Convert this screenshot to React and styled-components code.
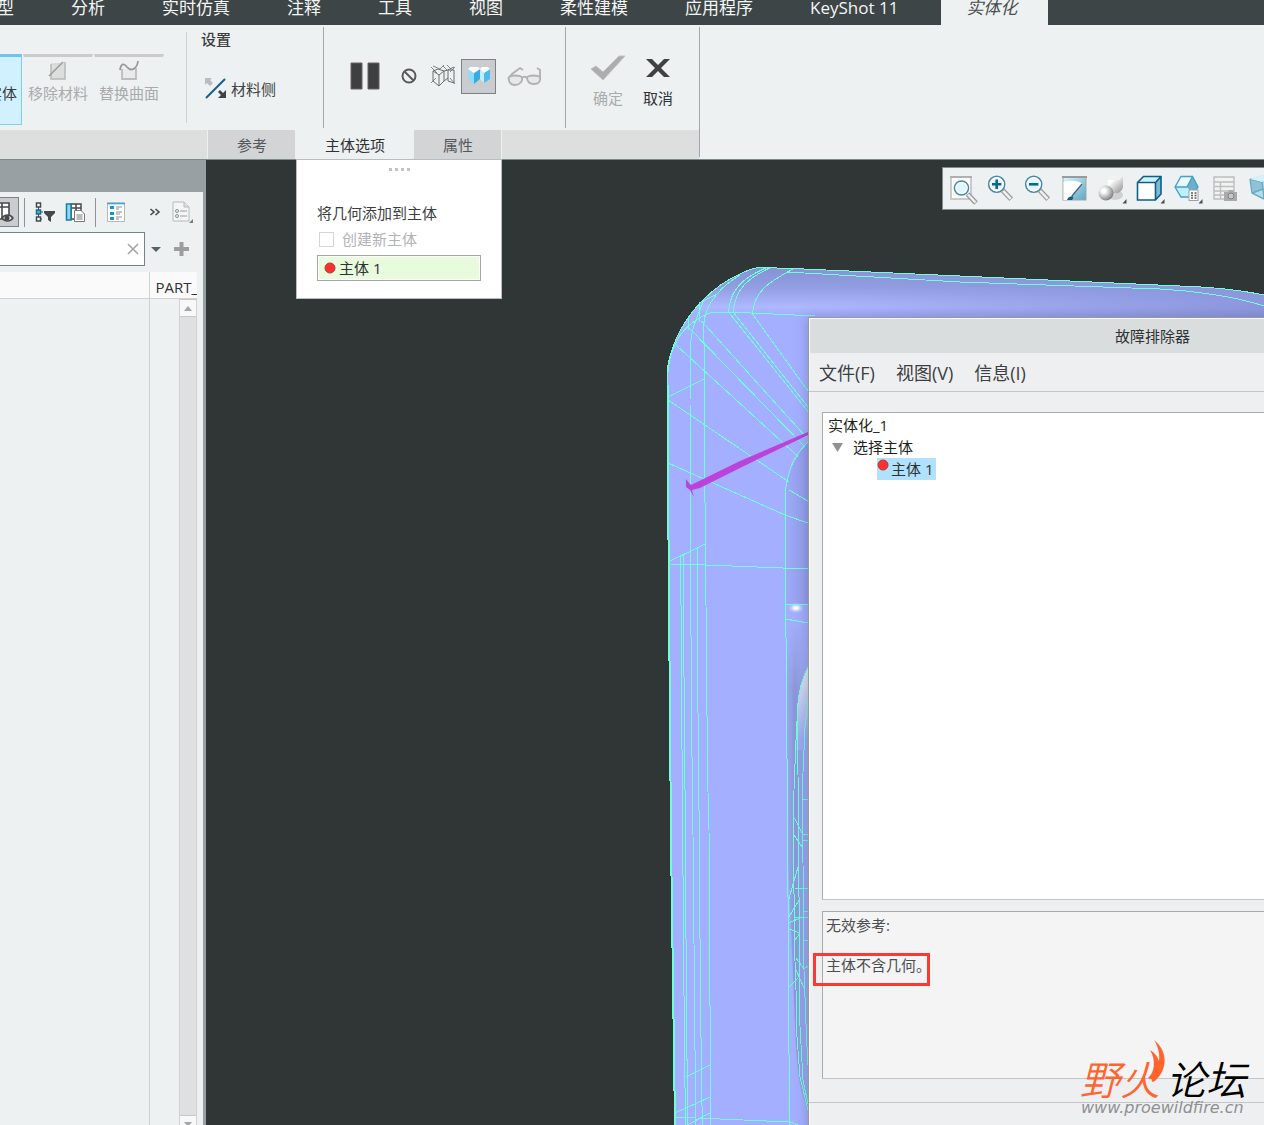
import React, { useState } from 'react';
import styled, { createGlobalStyle } from 'styled-components';

const GlobalStyle = createGlobalStyle`
* {
  box-sizing: border-box;
}
body {
  margin: 0;
  font-family: "Open Sans", "Noto Sans CJK SC", sans-serif;
  font-size: 15px;
  line-height: 20px;
  color: #3c3f41;
}
button, input {
  font: inherit;
  color: inherit;
}
button {
  padding: 0;
  border: none;
  background: none;
  white-space: nowrap;
}
svg {
  display: block;
  flex: none;
  overflow: visible;
}
`

const Page = styled.div`
display: flex;
flex-direction: column;
height: 100vh;
overflow: hidden;
background-color: #303636;
position: relative;
`

/* ---------- top menu ---------- */
const MenuBar = styled.nav`
display: flex;
flex: none;
height: 25px;
margin-left: -48px;
background-color: #3d4546;
overflow: hidden;
`
const MenuTab = styled.button`
height: 25px;
padding: ${props => props.$active ? '0 31px 10px 25px' : '0 29px 10px 28px'};
margin-left: ${props => props.$active ? '14px' : '0'};
font-size: 17px;
line-height: 14px;
font-style: ${props => props.$active ? 'italic' : 'normal'};
color: ${props => props.$active ? '#4a4d4e' : '#f4f6f6'};
background-color: ${props => props.$active ? '#edf1f2' : 'transparent'};
`

/* ---------- ribbon ---------- */
const Ribbon = styled.header`
display: flex;
flex: none;
position: relative;
z-index: 5;
background-color: #edf1f2;
border-bottom: 1px solid #7d8a8a;
`
const RibbonMain = styled.div`
display: flex;
flex-direction: column;
`
const RibbonTools = styled.div`
display: flex;
height: 105px;
`
const Divider = styled.span`
flex: none;
width: 1px;
margin: ${props => props.$inset || '2px'} 0;
background-color: ${props => props.$color || '#a3a7a8'};
`
const SolidGroup = styled.div`
display: flex;
align-items: flex-start;
gap: 1px;
padding: 29px 22px 0 0;
margin-left: -48px;
`
const BigButton = styled.button`
display: flex;
flex-direction: column;
align-items: center;
justify-content: flex-end;
width: 70px;
height: 71px;
padding-bottom: 21px;
color: ${props => props.$active ? '#3c3f41' : '#a9abac'};
background-color: ${props => props.$active ? '#d2f1ff' : 'transparent'};
border: 1px solid ${props => props.$active ? '#7fcdf7' : 'transparent'};
border-top: 3px solid ${props => props.$active ? '#6cc4f2' : '#c9cbcc'};
`
const SettingGroup = styled.div`
padding: 4px 47px 0 14px;
`
const GroupTitle = styled.div`
font-weight: 500;
`
const SideButton = styled.button`
display: flex;
align-items: center;
gap: 5px;
margin: 29px 0 0 4px;
`
const PreviewGroup = styled.div`
display: flex;
align-items: center;
padding: 0 24px 3px 26px;
gap: 11px;
`
const PreviewButton = styled.button`
display: flex;
align-items: center;
justify-content: center;
width: ${props => props.$active ? '35px' : 'auto'};
height: 35px;
margin-left: ${props => props.$active ? '-6px' : '0'};
background-color: ${props => props.$active ? '#cbcccf' : 'transparent'};
border: ${props => props.$active ? '1px solid #7e8182' : 'none'};
`
const ConfirmGroup = styled.div`
display: flex;
align-items: flex-start;
gap: 17px;
padding: 29px 26px 0 24px;
`
const ConfirmButton = styled.button`
display: flex;
flex-direction: column;
align-items: center;
gap: 6px;
color: ${props => props.disabled ? '#a9abac' : '#303334'};
`
const TabStrip = styled.div`
display: flex;
height: 29px;
padding-left: 207px;
background-color: #dddfdf;
`
const TabHolder = styled.div`
position: relative;
border-left: 1px solid #eef0f0;
&:last-child {
  border-right: 1px solid #eef0f0;
}
`
const StripTab = styled.button`
height: 29px;
padding: 1px 28px 0 29px;
color: ${props => props.$active ? '#303334' : '#55585a'};
background-color: ${props => props.$active ? '#edf1f2' : '#d3d4d6'};
`

/* ---------- drop panel under the tab ---------- */
const Popup = styled.section`
position: absolute;
top: 100%;
left: 0;
width: 206px;
padding: 8px 20px 17px;
background-color: #ffffff;
border: 1px solid #b9bdbf;
`
const Grip = styled.div`
display: flex;
justify-content: center;
gap: 3px;
height: 35px;
span {
  width: 3px;
  height: 3px;
  background-color: #c3c3c3;
}
`
const CheckLabel = styled.label`
display: flex;
align-items: center;
gap: 8px;
margin: 6px 0;
padding-left: 2px;
color: #b1b3b4;
input {
  appearance: none;
  width: 15px;
  height: 15px;
  margin: 0;
  border: 1px solid #d4d6d6;
}
`
const BodyField = styled.button`
display: flex;
align-items: center;
gap: 3px;
width: 100%;
height: 26px;
padding-left: 6px;
color: #303334;
background-color: #e8fbdd;
border: 1px solid #a4a7a8;
box-shadow: inset 0 0 0 1px #ffffff;
`

/* ---------- model tree ---------- */
const Workspace = styled.main`
display: flex;
flex: 1;
min-height: 0;
`
const TreePanel = styled.aside`
display: flex;
flex-direction: column;
flex: none;
padding: 32px 3px 0 0;
background-color: #99a0a3;
`
const TreeBody = styled.div`
display: flex;
flex-direction: column;
flex: 1;
min-height: 0;
padding-right: 6px;
background-color: #edf1f2;
`
const TreeTools = styled.div`
display: flex;
align-items: center;
gap: 10px;
height: 40px;
margin-left: -21px;
`
const TreeToolButton = styled.button`
display: flex;
align-items: center;
justify-content: center;
width: ${props => props.$width || '20px'};
height: 30px;
margin-left: ${props => props.$push || '0'};
margin-right: ${props => props.$active ? '-5px' : '0'};
background-color: ${props => props.$active ? '#cbcccf' : 'transparent'};
border: ${props => props.$active ? '1px solid #7e8182' : 'none'};
`
const ToolDivider = styled.span`
width: 1px;
height: 29px;
background-color: #8e9394;
`
const SearchRow = styled.div`
display: flex;
align-items: center;
gap: 6px;
`
const SearchBox = styled.div`
display: flex;
align-items: center;
width: 146px;
height: 34px;
margin-left: -1px;
padding-right: 6px;
background-color: #ffffff;
border: 1px solid #71858a;
input {
  flex: 1;
  min-width: 0;
  border: none;
  outline: none;
  background: none;
}
`
const AddButton = styled.button`
margin-left: 7px;
`
const TreeTableWrap = styled.div`
position: relative;
flex: 1;
min-height: 0;
width: 197px;
margin-top: 6px;
overflow: hidden;
`
const TreeTable = styled.table`
width: 100%;
height: 100%;
table-layout: fixed;
border-collapse: collapse;
th {
  height: 26px;
  padding: 4px 0 0 6px;
  overflow: hidden;
  font-weight: 400;
  text-align: left;
  white-space: nowrap;
  color: #303334;
  background-color: #fafafa;
  border-bottom: 1px solid #cfd1d3;
}
th:first-child, td:first-child {
  width: 149px;
  border-right: 1px solid #cfd1d3;
}
`
const ScrollBar = styled.div`
position: absolute;
top: 27px;
right: 0;
bottom: -9px;
display: flex;
flex-direction: column;
justify-content: space-between;
width: 18px;
background-color: #dee0e2;
border: 1px solid #cfd1d3;
border-top: none;
`
const ScrollButton = styled.button`
display: flex;
align-items: center;
justify-content: center;
height: 18px;
background-color: #f7f8f8;
border: solid #c6c8ca;
border-width: 1px 0;
`

/* ---------- graphics area ---------- */
const Canvas = styled.div`
position: relative;
flex: 1;
overflow: hidden;
background-color: #303636;
`
const ModelDrawing = styled.svg`
width: 100%;
height: 100%;
`
const ViewBar = styled.div`
position: absolute;
top: 7px;
left: 736px;
display: flex;
height: 43px;
background-color: #edf1f2;
border: 1px solid #828c8b;
`
const ViewButton = styled.button`
display: flex;
flex: none;
align-items: center;
justify-content: center;
width: ${props => props.$menu ? '38px' : '37px'};
padding: 0 0 2px 2px;
`

/* ---------- dialog window ---------- */
const Dialog = styled.section`
position: absolute;
top: 157px;
left: 602px;
width: 688px;
bottom: -60px;
background-color: #eeeff1;
border: 1px solid #98999a;
box-shadow: inset 1px 1px 0 #fafafa, -1px 0 12px rgba(40, 40, 90, 0.25);
`
const DialogTitle = styled.h1`
height: 35px;
margin: 0 0 0 1px;
padding-top: 7px;
font-size: 15px;
font-weight: 400;
line-height: 20px;
text-align: center;
color: #303334;
background-color: #d9dddd;
border-top: 1px solid #f5f6f6;
`
const DialogMenu = styled.div`
display: flex;
gap: 21px;
height: 39px;
padding-left: 10px;
font-size: 18px;
border-bottom: 1px solid #c3c5c9;
button {
  padding-top: 2px;
}
`
const DialogBody = styled.div`
padding: 20px 12px 23px 13px;
border-bottom: 1px solid #c3c5c9;
`
const TreeList = styled.ul`
height: 488px;
margin: 0 0 11px;
padding: 1px 5px;
list-style: none;
line-height: 22px;
color: #1d1f20;
background-color: #ffffff;
border: 1px solid #a8abae;
border-bottom-color: #c3c5c9;
`
const TreeItem = styled.li`
display: flex;
align-items: center;
gap: 10px;
height: 22px;
padding-left: ${props => props.$indent || '0'};
`
const Selected = styled.span`
display: flex;
gap: 2px;
height: 22px;
padding: 0 3px 0 0;
color: #303334;
background-color: #b0e2ff;
svg {
  margin-top: 1px;
}
`
const Message = styled.div`
height: 168px;
padding: 3px 3px;
color: #4c4f51;
background-color: #f4f4f4;
border: 1px solid #a8abae;
border-bottom-color: #c3c5c9;
p {
  margin: 0 0 20px;
}
`
const Marked = styled.span`
position: relative;
&::after {
  content: "";
  position: absolute;
  inset: -2px 1px -11px -13px;
  border: 3px solid #fb3838;
}
`

/* ---------- site mark ---------- */
const SiteMark = styled.div`
position: absolute;
right: 18px;
bottom: 9px;
color: #000000;
`
const SiteName = styled.div`
display: flex;
gap: 6px;
font-family: "Noto Sans CJK SC", sans-serif;
font-size: 40px;
font-weight: 350;
font-style: italic;
line-height: 44px;
white-space: nowrap;
`
const Fire = styled.span`
color: #ff6430;
`
const SiteUrl = styled.div`
padding-left: 1px;
font-family: "DejaVu Sans", sans-serif;
font-size: 16px;
font-style: italic;
line-height: 16px;
color: #8e9092;
`
const Flame = styled.svg`
position: absolute;
top: -16px;
left: 67px;
`

function RedDot() {
    return (
        <svg width="12" height="12" viewBox="0 0 12 12">
            <circle cx="6" cy="6" r="5" fill="#fb3131" stroke="#b33a33" />
        </svg>
    )
}

function Triangle({ up, width = 10, height = 5, color = '#5c6061' }) {
    return (
        <svg width={width} height={height} viewBox="0 0 10 5" preserveAspectRatio="none">
            <path d={up ? 'M0 5L5 0L10 5Z' : 'M0 0H10L5 5Z'} fill={color} />
        </svg>
    )
}

function Corner() {
    return <path d="M25.500 29.500H29.500V25Z" fill="#4a4d4e" />
}

function Lens({ x, y, r, sign }) {
    return (
        <g>
            <path d={`M${x + 6} ${y + 6}l8.500 9`} stroke="#9b9c9d" strokeWidth="5" />
            <path d={`M${x + 6.5} ${y + 6.5}l7.500 8`} stroke="#f0f0f0" strokeWidth="2.500" />
            <circle cx={x} cy={y} r={r} fill="#dff6ff" stroke="#4a88a5" strokeWidth="1.6" />
            <circle cx={x} cy={y} r={r - 1.6} fill="none" stroke="#ffffff" strokeWidth="1.4" />
            {sign && <path d={sign} stroke="#0e668f" strokeWidth="2.6" />}
        </g>
    )
}

const viewIcons = [
    {
        name: '重新调整', draw: <>
            <rect x="2" y="3" width="20" height="22" fill="#fcfcfc" stroke="#c0c0c1" strokeWidth="1.6" />
            <path d="M1 3H23" stroke="#a9a9aa" strokeWidth="1.600" />
            <Lens x={12.5} y={14} r={7} />
        </>
    },
    { name: '放大', draw: <Lens x={10.7} y={10.3} r={8} sign="M6 10.300h9.400M10.700 5.600v9.400" /> },
    { name: '缩小', draw: <Lens x={10.7} y={10.3} r={8} sign="M6 10.300h9.400" /> },
    {
        name: '重画', draw: <>
            <rect x="3" y="3" width="23" height="23" fill="url(#sky)" stroke="#a5a7a8" />
            <path d="M3.500 8C10 6 18 6 22 9.500L11 22L7 26H3.500Z" fill="#ffffff" />
            <path d="M22 10L12 22" stroke="#41677a" strokeWidth="1.200" />
            <path d="M7 26C8 23 10 22 13 22.500C13.500 24 13 25 12 26Z" fill="#0d5f85" />
            <path d="M2 3H27" stroke="#989a9b" strokeWidth="2" />
        </>
    },
    {
        name: '渲染选项', menu: true, draw: <>
            <ellipse cx="18" cy="21" rx="8" ry="5" fill="#cfd0d1" />
            <path d="M11 5Q12 2 15 2H26V13Q25 17 21 19H11Z" fill="url(#steel)" />
            <path d="M11 5Q12 2 15 2H26L22 6H11Z" fill="#f1f1f1" />
            <circle cx="9" cy="19" r="7.500" fill="url(#ball)" />
            <Corner />
        </>
    },
    {
        name: '显示样式', menu: true, draw: <>
            <path d="M2.500 8.500L8.500 2.500H26L20.500 8.500Z" fill="#c9f3ff" />
            <path d="M20.500 8.500L26 2.500V20L20.500 26Z" fill="#7fbad3" />
            <path d="M2.500 8.500H20.500V26H2.500Z" fill="#ffffff" />
            <path d="M2.500 8.500L8.500 2.500H26V20L20.500 26H2.500ZM2.500 8.500H20.500V26M20.500 8.500L26 2.500" fill="none" stroke="#0d5f85" strokeWidth="1.600" />
            <Corner />
        </>
    },
    {
        name: '已保存方向', menu: true, draw: <>
            <path d="M2 13L8 2.500H19.500L14 13Z" fill="#e8faff" />
            <path d="M2 13H14L18 23H8Z" fill="#bfeeff" />
            <path d="M19.500 2.500L25 13L22 17H17L14 13Z" fill="#6db0cc" />
            <path d="M2 13L8 2.500H19.500L25 13L18 23H8ZM2 13H14L19.500 2.500" fill="none" stroke="#46a1c6" strokeWidth="1.400" />
            <rect x="16" y="16" width="9" height="10.500" fill="#ffffff" stroke="#a0a0a0" />
            <path d="M18 19h2M21.500 19h2M18 21.500h2M21.500 21.500h2M18 24h2M21.500 24h2" stroke="#5b5b5b" strokeWidth="1.300" />
            <Corner />
        </>
    },
    {
        name: '视图管理器', draw: <>
            <path d="M3 3H23V25H3ZM3 8H23M3 12.500H23M3 17H23M3 21H14M9.500 8V25" fill="#f2f2f2" stroke="#bcbebf" strokeWidth="1.400" />
            <path d="M13 18H17L18 16H22L23 18H26V27H13Z" fill="#a8aaab" />
            <circle cx="20" cy="22" r="3" fill="#c5c6c7" stroke="#808283" />
        </>
    },
    {
        name: '透视图', draw: <>
            <path d="M2 5L14 1L27 4L25 20L16 25L4 19Z" fill="#b4dcea" />
            <path d="M2 5L5 18L15 15L14 8Z" fill="#8fc2d6" />
            <path d="M2 5L14 8L27 4M14 8L15 15L16 25M4 19L15 15L25 20M2 5L4 19L16 25" fill="none" stroke="#6ba9c0" strokeWidth="1.400" />
            <path d="M2 5L14 1L27 4L14 8Z" fill="#d5f2fc" />
        </>
    },
]

function ViewToolbar() {
    return (
        <ViewBar>
            {viewIcons.map(icon => (
                <ViewButton key={icon.name} aria-label={icon.name} $menu={icon.menu}>
                    <svg width="28" height="28" viewBox="0 0 28 28">{icon.draw}</svg>
                </ViewButton>
            ))}
        </ViewBar>
    )
}

const outline = 'M1264 295C1240 290 1210 287 1180 286L960 276L793 268.500L760 267.500C750 268 745 272 740 274C726 280 714 289 703 300C692 311 683 324 677 337C671 350 668 361 667 372V390'

/* mesh edges of the part, in window coordinates */
const edges = [
    'M815 316L730 312L710 313C702 315 697 320 692 323C683 330 678 338 677 341C671 351 669 360 668 372',
    'M787 272L960 282L1160 289C1200 291 1240 298 1264 306',
    'M768 267C742 278 730 290 728.500 312L808 411.500',
    'M772 267C747 278 735 290 733 312L808 407',
    'M793 269C771 281 754 290 752.500 314L808 391',
    'M740 275C722 286 711 298 706 313C702 325 704 336 704 342L704.500 460L705.500 543L706.500 668L707.700 780L709 830L710 1006L711 1125',
    'M699 305L700 322M688 318L688 330M699 303L717 294M704 300C700 310 692 325 691 340L690 400L690.500 555L691.500 716L693 835L695 1050L696 1125',
    'M701.500 321L806 437', 'M688 327L805 447', 'M676 345L798 456.500',
    'M668 400L789 482', 'M789 490L808 501', 'M668 463L785 515L808 523', 'M668 397L704 379',
    'M808 442C801 449 795 458 793 462C787 475 785 488 785 502L785.500 575L786.500 700L787.700 840L788.700 1023L789.700 1125',
    'M670 561L705.500 544', 'M670 564L706 565L808 569',
    'M680.700 555L681.700 713L682.700 830L683.500 947L684.700 1063L685.500 1125',
    'M683 555L684 677L685 790L685.700 903L686.700 1017L687.500 1125',
    'M697.300 548L697.300 647L698.300 740L699.300 840L700.300 980L701.300 1060L702.300 1125',
    'M686 1077L710 1065', 'M675 1113L710 1097', 'M675 1117H695', 'M687 1125L710 1113',
    'M700 1118L720 1119L790 1122L798 1125',
    'M786 604H808', 'M786 619L808 623',
    'M808 667C801 680 799 692 798 703L796 740L794 790L793.500 840L794.500 947L796 990L797 1037L800 1077L808 1110',
    'M808 700L805 727L803 773L802.500 833L803 863L803.500 957L806.500 1037L808 1065',
    'M797 710L798 775L798.500 840L799 897L800 950L799.500 1017L803 1080L808 1104',
    'M803 799H808', 'M803 834H808', 'M803 840H808', 'M803 911H808', 'M795 917H808', 'M803 940H808', 'M795 888H808',
    'M794.500 818L803 835', 'M794 835L802 847', 'M798 867L788 902', 'M799 900L789 917', 'M789 923L800 918',
    'M789 929L800 933L795 940', 'M796 958L804 969L808 966', 'M796 970L804 988', 'M789 987L798 978',
]

function PartModel() {
    return (
        <ModelDrawing viewBox="206 160 1058 965" preserveAspectRatio="xMinYMin slice" aria-hidden="true">
            <defs>
                <linearGradient id="bevel" x1="0" y1="267" x2="0" y2="314" gradientUnits="userSpaceOnUse">
                    <stop offset="0" stopColor="#8791d4" />
                    <stop offset="0.450" stopColor="#939ee3" />
                    <stop offset="0.850" stopColor="#adb8ff" />
                    <stop offset="1" stopColor="#a5b0fd" />
                </linearGradient>
                <linearGradient id="far" x1="830" y1="0" x2="1264" y2="0" gradientUnits="userSpaceOnUse">
                    <stop offset="0" stopColor="#8a94da" stopOpacity="0" />
                    <stop offset="1" stopColor="#8a94da" stopOpacity="0.900" />
                </linearGradient>
                <linearGradient id="pocket" x1="786" y1="0" x2="808" y2="0" gradientUnits="userSpaceOnUse">
                    <stop offset="0" stopColor="#9ca7f2" />
                    <stop offset="0.400" stopColor="#8b96d8" />
                    <stop offset="1" stopColor="#a0abf5" />
                </linearGradient>
                <linearGradient id="lip" x1="770" y1="0" x2="808" y2="0" gradientUnits="userSpaceOnUse">
                    <stop offset="0" stopColor="#929de8" stopOpacity="0" />
                    <stop offset="1" stopColor="#929de8" stopOpacity="0.900" />
                </linearGradient>
                <linearGradient id="fade" x1="0" y1="604" x2="0" y2="690" gradientUnits="userSpaceOnUse">
                    <stop offset="0.200" stopColor="#a3affd" />
                    <stop offset="1" stopColor="#a3affd" stopOpacity="0" />
                </linearGradient>
                <linearGradient id="rim" x1="0" y1="667" x2="0" y2="740" gradientUnits="userSpaceOnUse">
                    <stop offset="0" stopColor="#e3edee" />
                    <stop offset="1" stopColor="#9da9f3" />
                </linearGradient>
                <radialGradient id="shine">
                    <stop offset="0.200" stopColor="#ffffff" />
                    <stop offset="1" stopColor="#a3affd" stopOpacity="0" />
                </radialGradient>
                <linearGradient id="sky" x1="0" y1="0" x2="1" y2="1">
                    <stop offset="0" stopColor="#d9f6ff" />
                    <stop offset="1" stopColor="#5ea6c3" />
                </linearGradient>
                <linearGradient id="steel" x1="0.200" y1="0" x2="1" y2="1">
                    <stop offset="0.200" stopColor="#ffffff" />
                    <stop offset="1" stopColor="#8b8c8d" />
                </linearGradient>
                <radialGradient id="ball" cx="0.350" cy="0.350" r="0.650">
                    <stop offset="0.200" stopColor="#ffffff" />
                    <stop offset="1" stopColor="#858788" />
                </radialGradient>
            </defs>
            <path d={outline + 'L668.500 540L671 840L675 1125H1264Z'} fill="#a4b0ff" />
            <path d="M1264 295C1240 290 1210 287 1180 286L960 276L793 268.500L760 267.500C750 268 745 272 740 274C726 280 714 289 703 300C692 311 683 324 677 340C684 330 698 314 712 313L730 312L808 316L1264 330Z" fill="url(#bevel)" />
            <path d="M830 271L960 276L1180 286C1210 287 1240 290 1264 295V330H830Z" fill="url(#far)" />
            <path d="M808 442C795 456 785 480 785 502L786 604H808Z" fill="url(#lip)" />
            <path d="M786 605H808V1110C798 1090 796 1060 794 1000L788 860Z" fill="url(#pocket)" />
            <path d="M786 605H808V690H786Z" fill="url(#fade)" />
            <path d="M808 667C801 680 799 692 798 703L796 750H808Z" fill="url(#rim)" />
            <ellipse cx="796" cy="608" rx="9" ry="6" fill="url(#shine)" />
            <g fill="none" stroke="#6dffd8" strokeWidth="1" shapeRendering="crispEdges">
                <path d={outline} />
                <path d="M667.500 385L668.500 540L671 840L675 1125" strokeWidth="2" />
                {edges.map(d => <path key={d} d={d} />)}
            </g>
            <path d="M808 432L740 461L691 485L689 483L686 479L686 487L690 490L694 497L692 490L700 488L740 468L808 435Z" fill="#bb42dd" />
        </ModelDrawing>
    )
}

function BodyPanel() {
    return (
        <Popup>
            <Grip><span /><span /><span /><span /></Grip>
            <div>将几何添加到主体</div>
            <CheckLabel>
                <input type="checkbox" disabled />
                创建新主体
            </CheckLabel>
            <BodyField><RedDot />主体 1</BodyField>
        </Popup>
    )
}

function RibbonBar() {
    const [tab, setTab] = useState('主体选项');

    return (
        <Ribbon>
            <RibbonMain>
                <RibbonTools>
                    <SolidGroup>
                        <BigButton $active>填充实体</BigButton>
                        <BigButton disabled>
                            <svg width="20" height="22" viewBox="0 0 20 22">
                                <path d="M3 3V18H17V1" fill="#dcdddd" stroke="#b7b8b8" strokeWidth="1.5" />
                                <path d="M3 3H14" stroke="#c9cacb" strokeDasharray="2 1" />
                                <path d="M1 15L15 1" stroke="#9c9e9f" strokeWidth="1.600" />
                            </svg>
                            移除材料
                        </BigButton>
                        <BigButton disabled>
                            <svg width="20" height="22" viewBox="0 0 20 22">
                                <path d="M3 8V18H17V7" fill="#e9eaea" stroke="#bcbdbe" strokeWidth="1.800" />
                                <path d="M1 9C2 2 5 2 8 6C12 11 18 8 19 0" fill="none" stroke="#989a9b" strokeWidth="1.800" />
                            </svg>
                            替换曲面
                        </BigButton>
                    </SolidGroup>
                    <Divider $inset="7px" $color="#cdd1d2" />
                    <SettingGroup>
                        <GroupTitle>设置</GroupTitle>
                        <SideButton>
                            <svg width="21" height="21" viewBox="0 0 21 21">
                                <path d="M1 20L20 1" stroke="#0f6189" strokeWidth="2" />
                                <path d="M0 0H7L5 2L8 5L5 8L2 5L0 7Z" fill="#b9bbbc" />
                                <path d="M21 20H13L16 17L13 14L15 12L18 15L21 12Z" fill="#404344" />
                            </svg>
                            材料侧
                        </SideButton>
                    </SettingGroup>
                    <Divider />
                    <PreviewGroup>
                        <PreviewButton aria-label="暂停">
                            <svg width="30" height="28" viewBox="0 0 30 28">
                                <path d="M1 1H12V27H1ZM18 1H29V27H18Z" fill="#3e3f40" stroke="#6a6060" strokeWidth="1" />
                            </svg>
                        </PreviewButton>
                        <PreviewButton aria-label="无预览">
                            <svg width="28" height="16" viewBox="-10 0 28 16">
                                <circle cx="8" cy="8" r="6.500" fill="none" stroke="#58595b" strokeWidth="2" />
                                <path d="M3.500 3.500L12.500 12.500" stroke="#58595b" strokeWidth="2" />
                            </svg>
                        </PreviewButton>
                        <PreviewButton aria-label="分离">
                            <svg width="26" height="24" viewBox="0 0 26 24" fill="none" stroke="#6c6e70">
                                <path d="M3 7L9 11V22L3 17ZM9 11L14 7V17L9 22M3 7L8 5L14 7" />
                                <path d="M18 6L24 3M18 6V17L24 19V6L18 6M14 7L18 6M14 17L18 14" />
                                <path d="M1 3L7 9M3 2L10 5L14 1M13 2L17 6M17 1L21 5M25 3L20 8M1 19L6 14M25 20L20 14" strokeWidth="0.800" />
                            </svg>
                        </PreviewButton>
                        <PreviewButton aria-label="连接" $active>
                            <svg width="24" height="18" viewBox="0 0 24 18">
                                <path d="M1 2L7 6V17L1 12Z" fill="#8fdcf8" />
                                <path d="M13 2L7 6V17L13 12Z" fill="#35ade4" />
                                <path d="M13 3L17 6V16L13 12Z" fill="#c4eefc" />
                                <path d="M23 2L17 6V16L23 12Z" fill="#4dbbec" />
                                <path d="M1 2L3 0H11L13 2L7 6ZM13 2L15 0H21L23 2L17 6Z" fill="#ffffff" />
                            </svg>
                        </PreviewButton>
                        <PreviewButton aria-label="校核" disabled>
                            <svg width="34" height="16" viewBox="0 2 34 16" fill="#e7e8e8" stroke="#aeb0b1" strokeWidth="1.800">
                                <path d="M1 13L5 8L13 2L16 4M30 2L33 4V11" fill="none" />
                                <path d="M2 11C5 9 12 9 15 11C16 15 13 19 8 19C3 19 1 15 2 11ZM20 11C23 9 30 9 33 11C34 16 31 18 27 18C22 18 20 15 20 11ZM15 12C17 10 18 10 20 12" />
                            </svg>
                        </PreviewButton>
                    </PreviewGroup>
                    <Divider />
                    <ConfirmGroup>
                        <ConfirmButton disabled>
                            <svg width="36" height="28" viewBox="0 0 36 28">
                                <path d="M1 15L6 12L13 18L29 2H35L13 26Z" fill="#abadae" stroke="#c0c2c3" />
                            </svg>
                            确定
                        </ConfirmButton>
                        <ConfirmButton>
                            <svg width="30" height="28" viewBox="0 0 30 28">
                                <path d="M3 5H9L15 11L21 5H27L18 14L27 23H21L15 17L9 23H3L12 14Z" fill="#3f4142" />
                            </svg>
                            取消
                        </ConfirmButton>
                    </ConfirmGroup>
                </RibbonTools>
                <TabStrip>
                    {['参考', '主体选项', '属性'].map(name => (
                        <TabHolder key={name}>
                            <StripTab $active={tab === name} onClick={() => setTab(name)}>{name}</StripTab>
                            {name === '主体选项' && tab === name && <BodyPanel />}
                        </TabHolder>
                    ))}
                </TabStrip>
            </RibbonMain>
            <Divider />
        </Ribbon>
    )
}

function ModelTree() {
    return (
        <TreePanel>
            <TreeBody>
                <TreeTools>
                    <TreeToolButton $active $width="40px" aria-label="列显示">
                        <svg width="28" height="20" viewBox="0 0 28 20">
                            <path d="M11 1H24V17H11ZM11 5H24M17 1V17" fill="#fff" stroke="#45494a" strokeWidth="1.6" />
                            <path d="M10 1H15V18H10Z" fill="#1680b4" />
                            <path d="M17 16C20 12 25 12 28 16C25 20 20 20 17 16Z" fill="#e8e8e8" stroke="#45494a" strokeWidth="1.5" />
                            <circle cx="22" cy="16" r="2.500" fill="#45494a" />
                        </svg>
                    </TreeToolButton>
                    <ToolDivider />
                    <TreeToolButton aria-label="树过滤器">
                        <svg width="20" height="20" viewBox="0 0 20 20">
                            <path d="M3.500 2V18M3.500 10H8M3.500 17H7" stroke="#45494a" />
                            <path d="M1.500 1H5.500V5H1.500ZM1.500 15H5.500V19H1.500Z" fill="#fff" stroke="#45494a" strokeWidth="1.500" />
                            <path d="M1.500 8H5.500V12H1.500Z" fill="#44b8ea" stroke="#1b6a90" strokeWidth="1.500" />
                            <path d="M9 9H20V11L16 15V20L13 18V15L9 11Z" fill="#45494a" />
                        </svg>
                    </TreeToolButton>
                    <TreeToolButton aria-label="树列">
                        <svg width="20" height="20" viewBox="0 0 20 20">
                            <path d="M6 2H16V17H6ZM6 6H16M11 2V17" fill="#fff" stroke="#45494a" strokeWidth="1.500" />
                            <path d="M1.500 2H6V18H1.500Z" fill="#8bdcf8" stroke="#1b7ba8" strokeWidth="1.500" />
                            <path d="M9.500 8.500H16L19.500 12V19.500H9.500Z" fill="#fff" stroke="#77797a" />
                            <path d="M11.500 13h6M11.500 15h6M11.500 17h6" stroke="#77797a" />
                        </svg>
                    </TreeToolButton>
                    <ToolDivider />
                    <TreeToolButton aria-label="显示">
                        <svg width="18" height="20" viewBox="0 0 18 20">
                            <path d="M0.500 1V19.500H17.500V1Z" fill="#fff" stroke="#b5b7b8" />
                            <path d="M0 1.500H18" stroke="#36a6db" strokeWidth="1.600" />
                            <path d="M3 4h4v3H3ZM3 10h4v3H3ZM3 15h4v3H3Z" fill="#1b92cb" />
                            <path d="M9 5h6M9 7h3M9 10h6M9 12h4M9 15h6M9 17h3" stroke="#8c8e8f" />
                        </svg>
                    </TreeToolButton>
                    <TreeToolButton $width="10px" $push="14px" aria-label="更多">
                        <svg width="10" height="8" viewBox="0 0 10 8" fill="none" stroke="#45494a" strokeWidth="1.600">
                            <path d="M0.500 1L4 4L0.500 7M5.500 1L9 4L5.500 7" />
                        </svg>
                    </TreeToolButton>
                    <TreeToolButton $width="24px" aria-label="设置">
                        <svg width="20" height="22" viewBox="0 0 20 22">
                            <path d="M1 1H12L17 6V20H1Z" fill="#f4f5f5" stroke="#b7babb" />
                            <path d="M12 1V6H17" fill="#dcdedf" stroke="#b7babb" />
                            <circle cx="5" cy="10" r="1.500" fill="none" stroke="#7f9098" />
                            <circle cx="5" cy="15" r="1.500" fill="none" stroke="#7f9098" />
                            <path d="M8 10h7M8 15h7" stroke="#9a9d9e" />
                            <path d="M17 22H21V18Z" fill="#77797a" />
                        </svg>
                    </TreeToolButton>
                </TreeTools>
                <SearchRow>
                    <SearchBox>
                        <input type="text" name="search" aria-label="搜索" />
                        <button aria-label="清除">
                            <svg width="10" height="10" viewBox="0 0 10 10">
                                <path d="M0 0L10 10M10 0L0 10" stroke="#a3a5a6" strokeWidth="1.600" />
                            </svg>
                        </button>
                    </SearchBox>
                    <button aria-label="搜索选项"><Triangle /></button>
                    <AddButton aria-label="添加">
                        <svg width="15" height="14" viewBox="0 0 15 14">
                            <path d="M7.500 0V14M0 7H15" stroke="#9b9d9e" strokeWidth="4" />
                        </svg>
                    </AddButton>
                </SearchRow>
                <TreeTableWrap>
                    <TreeTable>
                        <thead>
                            <tr><th /><th>PART_</th></tr>
                        </thead>
                        <tbody>
                            <tr><td /><td /></tr>
                        </tbody>
                    </TreeTable>
                    <ScrollBar>
                        <ScrollButton aria-label="向上"><Triangle up width={8} color="#a3a5a6" /></ScrollButton>
                        <ScrollButton aria-label="向下"><Triangle width={8} color="#a3a5a6" /></ScrollButton>
                    </ScrollBar>
                </TreeTableWrap>
            </TreeBody>
        </TreePanel>
    )
}

function Troubleshooter() {
    return (
        <Dialog>
            <DialogTitle>故障排除器</DialogTitle>
            <DialogMenu>
                <button>文件(F)</button>
                <button>视图(V)</button>
                <button>信息(I)</button>
            </DialogMenu>
            <DialogBody>
                <TreeList>
                    <TreeItem>实体化_1</TreeItem>
                    <TreeItem $indent="4px"><Triangle width={11} height={9} color="#8f9192" />选择主体</TreeItem>
                    <TreeItem $indent="49px"><Selected><RedDot />主体 1</Selected></TreeItem>
                </TreeList>
                <Message>
                    <p>无效参考:</p>
                    <p><Marked>主体不含几何。</Marked></p>
                </Message>
            </DialogBody>
        </Dialog>
    )
}

function App() {
    const menus = ['模型', '分析', '实时仿真', '注释', '工具', '视图', '柔性建模', '应用程序', 'KeyShot 11'];

    return (
        <Page>
            <GlobalStyle />
            <MenuBar>
                {menus.map(name => <MenuTab key={name}>{name}</MenuTab>)}
                <MenuTab $active>实体化</MenuTab>
            </MenuBar>
            <RibbonBar />
            <Workspace>
                <ModelTree />
                <Canvas>
                    <PartModel />
                    <ViewToolbar />
                    <Troubleshooter />
                </Canvas>
            </Workspace>
            <SiteMark>
                <SiteName><Fire>野火</Fire>论坛</SiteName>
                <SiteUrl>www.proewildfire.cn</SiteUrl>
                <Flame width="20" height="42" viewBox="0 0 20 42">
                    <path d="M7 0C20 10 22 28 8 41L1 38C8 32 9 20 3 10C8 13 10 16 12 21C13 14 11 6 7 0Z" fill="#ff6430" />
                </Flame>
            </SiteMark>
        </Page>
    )
}

export default App;
